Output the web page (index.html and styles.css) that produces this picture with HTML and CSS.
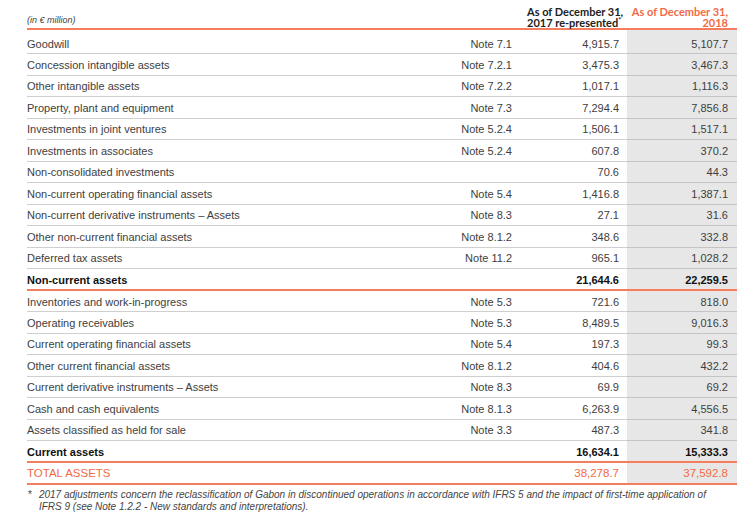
FILE: index.html
```html
<!DOCTYPE html>
<html lang="en">
<head>
<meta charset="utf-8">
<title>Assets</title>
<link rel="stylesheet" href="styles.css">
</head>
<body>
<div class="page">
  <table class="bs">
    <colgroup>
      <col class="c-label">
      <col class="c-note">
      <col class="c-prev">
      <col class="c-cur">
    </colgroup>
    <thead>
      <tr>
        <th class="unit">(in € million)</th>
        <th></th>
        <th class="prev"><span class="hl">As of December 31,</span><span class="hl">2017 re-presented<sup>*</sup></span></th>
        <th class="cur"><span class="hl">As of December 31,</span><span class="hl">2018</span></th>
      </tr>
    </thead>
    <tbody>
      <tr class="first"><td>Goodwill</td><td class="note">Note 7.1</td><td class="num">4,915.7</td><td class="num cur">5,107.7</td></tr>
      <tr><td>Concession intangible assets</td><td class="note">Note 7.2.1</td><td class="num">3,475.3</td><td class="num cur">3,467.3</td></tr>
      <tr><td>Other intangible assets</td><td class="note">Note 7.2.2</td><td class="num">1,017.1</td><td class="num cur">1,116.3</td></tr>
      <tr><td>Property, plant and equipment</td><td class="note">Note 7.3</td><td class="num">7,294.4</td><td class="num cur">7,856.8</td></tr>
      <tr><td>Investments in joint ventures</td><td class="note">Note 5.2.4</td><td class="num">1,506.1</td><td class="num cur">1,517.1</td></tr>
      <tr><td>Investments in associates</td><td class="note">Note 5.2.4</td><td class="num">607.8</td><td class="num cur">370.2</td></tr>
      <tr><td>Non-consolidated investments</td><td class="note"></td><td class="num">70.6</td><td class="num cur">44.3</td></tr>
      <tr><td>Non-current operating financial assets</td><td class="note">Note 5.4</td><td class="num">1,416.8</td><td class="num cur">1,387.1</td></tr>
      <tr><td>Non-current derivative instruments – Assets</td><td class="note">Note 8.3</td><td class="num">27.1</td><td class="num cur">31.6</td></tr>
      <tr><td>Other non-current financial assets</td><td class="note">Note 8.1.2</td><td class="num">348.6</td><td class="num cur">332.8</td></tr>
      <tr><td>Deferred tax assets</td><td class="note">Note 11.2</td><td class="num">965.1</td><td class="num cur">1,028.2</td></tr>
      <tr class="sub"><td>Non-current assets</td><td class="note"></td><td class="num">21,644.6</td><td class="num cur">22,259.5</td></tr>
      <tr><td>Inventories and work-in-progress</td><td class="note">Note 5.3</td><td class="num">721.6</td><td class="num cur">818.0</td></tr>
      <tr><td>Operating receivables</td><td class="note">Note 5.3</td><td class="num">8,489.5</td><td class="num cur">9,016.3</td></tr>
      <tr><td>Current operating financial assets</td><td class="note">Note 5.4</td><td class="num">197.3</td><td class="num cur">99.3</td></tr>
      <tr><td>Other current financial assets</td><td class="note">Note 8.1.2</td><td class="num">404.6</td><td class="num cur">432.2</td></tr>
      <tr><td>Current derivative instruments – Assets</td><td class="note">Note 8.3</td><td class="num">69.9</td><td class="num cur">69.2</td></tr>
      <tr><td>Cash and cash equivalents</td><td class="note">Note 8.1.3</td><td class="num">6,263.9</td><td class="num cur">4,556.5</td></tr>
      <tr><td>Assets classified as held for sale</td><td class="note">Note 3.3</td><td class="num">487.3</td><td class="num cur">341.8</td></tr>
      <tr class="sub"><td>Current assets</td><td class="note"></td><td class="num">16,634.1</td><td class="num cur">15,333.3</td></tr>
      <tr class="total"><td>TOTAL ASSETS</td><td class="note"></td><td class="num">38,278.7</td><td class="num cur">37,592.8</td></tr>
    </tbody>
  </table>
  <div class="foot">
    <span class="star">*</span>
    <p>2017 adjustments concern the reclassification of Gabon in discontinued operations in accordance with IFRS 5 and the impact of first-time application of IFRS 9 (see Note 1.2.2 - New standards and interpretations).</p>
  </div>
</div>
</body>
</html>
```

FILE: styles.css
```css
html, body {
  margin: 0;
  padding: 0;
  background: #ffffff;
}

.page {
  padding-left: 27px;
  width: 710px;
  font-family: "Liberation Sans", Arial, sans-serif;
  color: #3e3e3e;
}

.bs {
  width: 710px;
  border-collapse: collapse;
  table-layout: fixed;
}

.c-label { width: 410px; }
.c-note { width: 90px; }
.c-prev { width: 100px; }
.c-cur { width: 110px; }

.bs thead th {
  height: 26px;
  padding: 0;
  vertical-align: bottom;
  border-bottom: 2px solid #f37d5c;
  font-weight: 700;
  white-space: nowrap;
}

.bs thead th.unit {
  text-align: left;
  font-family: "Liberation Sans", Arial, sans-serif;
  font-style: italic;
  font-weight: 400;
  font-size: 9px;
  line-height: 11px;
  color: #444444;
  padding-bottom: 2px;
}

.bs thead th.prev,
.bs thead th.cur {
  text-align: right;
  font-family: Lato, "Liberation Sans", sans-serif;
  font-size: 11px;
  line-height: 11px;
  padding-bottom: 1px;
}

.hl {
  display: block;
  height: 10.5px;
  line-height: 11px;
}

.bs thead th.prev {
  color: #222222;
  padding-right: 8px;
}

.bs thead th.cur {
  color: #f26a47;
  padding-right: 9px;
}

.bs thead sup {
  font-size: 7px;
  vertical-align: 4px;
  line-height: 0;
}

.bs tbody tr {
  height: 21.5px;
}

.bs tbody td {
  padding: 2px 0 0 0;
  font-size: 11px;
  line-height: 13px;
  vertical-align: middle;
  border-bottom: 1px solid #cfcfcf;
  white-space: nowrap;
}

.bs tbody tr.first td {
  padding-top: 5px;
  height: 18px;
}

.bs tbody td.note {
  text-align: right;
  padding-right: 15px;
}

.bs tbody td.num {
  text-align: right;
  padding-right: 8px;
}

.bs tbody td.cur {
  background: #e7e7e7;
  padding-right: 9px;
  border-bottom-color: #c4c4c4;
}

.bs tbody tr.sub td {
  font-weight: 700;
  color: #111111;
  border-bottom: 2px solid #f37d5c;
}

.bs tbody tr.total td {
  color: #f26a47;
  font-size: 11.5px;
  border-bottom: 2px solid #f37d5c;
}

.foot {
  display: flex;
  gap: 7px;
  margin-top: 4px;
  padding-left: 1px;
  font-size: 10px;
  line-height: 12.5px;
  font-style: italic;
  color: #444444;
}

.foot .star {
  font-style: normal;
}

.foot p {
  margin: 0;
  width: 690px;
}
```
